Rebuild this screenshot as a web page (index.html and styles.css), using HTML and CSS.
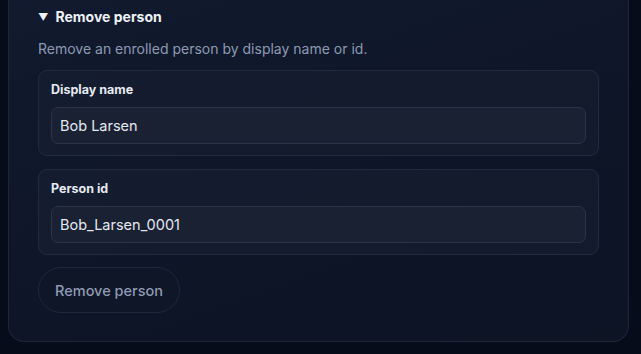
FILE: index.html
```html
<!DOCTYPE html>
<html>
<head>
	<link rel="stylesheet" href="styles.css">
</head>
<body>
	<div class="page">
		<details class="panel" open>
			<summary class="panelTitle">Remove person</summary>
			<p class="hint">Remove an enrolled person by display name or id.</p>

			<div class="field">
				<label class="fieldLabel" for="displayName">Display name</label>
				<input class="fieldInput" id="displayName" type="text" value="Bob Larsen">
			</div>

			<div class="field">
				<label class="fieldLabel" for="personId">Person id</label>
				<input class="fieldInput" id="personId" type="text" value="Bob_Larsen_0001">
			</div>

			<button class="removeBtn" type="button">Remove person</button>
		</details>
	</div>
</body>
</html>
```

FILE: styles.css
```css
* {
	box-sizing: border-box;
}

body {
	margin: 0;
	background: #070c1a;
	font-family: Inter, "Noto Sans", sans-serif;
	color: #e2e8f0;
}

.page {
	padding: 0 12px 12px 8px;
}

.panel {
	border: 1px solid #1e2638;
	border-top: none;
	border-radius: 0 0 16px 16px;
	background: linear-gradient(160deg, #111a2e 0%, #0e1527 60%, #0d1424 100%);
	padding: 7px 29px 28px 29px;
}

.panelTitle {
	list-style: none;
	font-size: 14px;
	font-weight: 700;
	line-height: 20px;
	color: #eef2f8;
	cursor: pointer;
}

.panelTitle::-webkit-details-marker {
	display: none;
}

.panelTitle::before {
	content: "\25BC";
	font-size: 10px;
	margin-right: 7px;
	position: relative;
	top: -1px;
}

.hint {
	margin: 11px 0 11px 0;
	font-size: 14px;
	line-height: 20px;
	color: #8d9ab3;
}

.field {
	border: 1px solid #222b3e;
	border-radius: 9px;
	background: linear-gradient(120deg, #141c2f 0%, #131a2b 100%);
	padding: 11px 12px 11px 12px;
	margin-bottom: 13px;
}

.field + .field {
	margin-bottom: 12px;
}

.fieldLabel {
	display: block;
	font-size: 12.5px;
	font-weight: 700;
	line-height: 16px;
	color: #e6ebf3;
	margin-bottom: 9px;
}

.fieldInput {
	display: block;
	width: 100%;
	height: 37px;
	border: 1px solid #2a3347;
	border-radius: 7px;
	background: #1a2133;
	color: #e4e9f1;
	font-family: Inter, "Noto Sans", sans-serif;
	font-size: 14.5px;
	padding: 0 8px;
	outline: none;
}

.removeBtn {
	display: block;
	height: 46px;
	width: 142px;
	border: 1px solid #1f283a;
	border-radius: 23px;
	background: #0f1628;
	color: #8f9bb3;
	font-family: Inter, "Noto Sans", sans-serif;
	font-size: 14.5px;
	font-weight: 500;
}
```
